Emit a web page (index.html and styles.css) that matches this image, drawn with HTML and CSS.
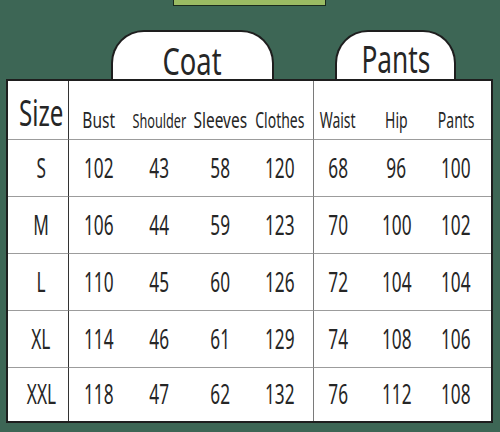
FILE: index.html
```html
<!DOCTYPE html>
<html>
<head>
<meta charset="utf-8">
<link rel="stylesheet" href="styles.css">
</head>
<body>
<div class="page">
  <div class="banner"></div>
  <div class="tabs">
    <div class="tab tab-coat"><span class="t">Coat</span></div>
    <div class="tab tab-pants"><span class="t">Pants</span></div>
  </div>
  <div class="table">
    <div class="cell head size-head"><span class="t">Size</span></div>
    <div class="cell head"><span class="t wide">Bust</span></div>
    <div class="cell head small"><span class="t">Shoulder</span></div>
    <div class="cell head"><span class="t wide">Sleeves</span></div>
    <div class="cell head"><span class="t">Clothes</span></div>
    <div class="cell head"><span class="t">Waist</span></div>
    <div class="cell head"><span class="t">Hip</span></div>
    <div class="cell head"><span class="t">Pants</span></div>

    <div class="cell"><span class="t">S</span></div>
    <div class="cell"><span class="t">102</span></div>
    <div class="cell"><span class="t">43</span></div>
    <div class="cell"><span class="t">58</span></div>
    <div class="cell"><span class="t">120</span></div>
    <div class="cell"><span class="t">68</span></div>
    <div class="cell"><span class="t">96</span></div>
    <div class="cell"><span class="t">100</span></div>

    <div class="cell"><span class="t">M</span></div>
    <div class="cell"><span class="t">106</span></div>
    <div class="cell"><span class="t">44</span></div>
    <div class="cell"><span class="t">59</span></div>
    <div class="cell"><span class="t">123</span></div>
    <div class="cell"><span class="t">70</span></div>
    <div class="cell"><span class="t">100</span></div>
    <div class="cell"><span class="t">102</span></div>

    <div class="cell"><span class="t">L</span></div>
    <div class="cell"><span class="t">110</span></div>
    <div class="cell"><span class="t">45</span></div>
    <div class="cell"><span class="t">60</span></div>
    <div class="cell"><span class="t">126</span></div>
    <div class="cell"><span class="t">72</span></div>
    <div class="cell"><span class="t">104</span></div>
    <div class="cell"><span class="t">104</span></div>

    <div class="cell"><span class="t">XL</span></div>
    <div class="cell"><span class="t">114</span></div>
    <div class="cell"><span class="t">46</span></div>
    <div class="cell"><span class="t">61</span></div>
    <div class="cell"><span class="t">129</span></div>
    <div class="cell"><span class="t">74</span></div>
    <div class="cell"><span class="t">108</span></div>
    <div class="cell"><span class="t">106</span></div>

    <div class="cell"><span class="t">XXL</span></div>
    <div class="cell"><span class="t">118</span></div>
    <div class="cell"><span class="t">47</span></div>
    <div class="cell"><span class="t">62</span></div>
    <div class="cell"><span class="t">132</span></div>
    <div class="cell"><span class="t">76</span></div>
    <div class="cell"><span class="t">112</span></div>
    <div class="cell"><span class="t">108</span></div>
  </div>
</div>
</body>
</html>
```
FILE: styles.css
```css
* { box-sizing: border-box; }

html, body {
  margin: 0;
  padding: 0;
}

body {
  width: 500px;
  height: 432px;
  overflow: hidden;
  background: #3d6655;
  font-family: "Noto Sans", "Open Sans", sans-serif;
  color: #262626;
}

.page {
  padding: 0 7px 0 6px;
}

.banner {
  margin-left: 167px;
  width: 153px;
  height: 6px;
  background: #9bbb63;
  border: 1px solid #1b2a1d;
  border-top: 0;
}

.tabs {
  display: flex;
  margin-top: 24px;
  height: 49px;
  padding-left: 105px;
  gap: 61px;
}

.tab {
  height: 49px;
  background: #fff;
  border: 2px solid #1e1e1e;
  border-bottom: 0;
  border-radius: 33px 33px 0 0;
  display: flex;
  justify-content: center;
  align-items: center;
  font-size: 38px;
  line-height: 1;
}

.tab-coat {
  width: 163px;
  padding-top: 8px;
}

.tab-coat .t { transform: scaleX(0.72); }

.tab-pants {
  width: 121px;
  padding-top: 4px;
}

.tab-pants .t { transform: scaleX(0.69); }

.t {
  display: inline-block;
  white-space: nowrap;
  transform: scaleX(0.65);
  transform-origin: center;
}

.t.wide { transform: scaleX(0.72); }

.table {
  width: 487px;
  background: #fff;
  border: 2px solid #1e1e1e;
  display: grid;
  grid-template-columns: 60px 61px 61px 61px 62px 59px 59px 60px;
  grid-template-rows: 59px 57px 57px 57px 57px 53px;
}

.cell {
  display: flex;
  justify-content: center;
  align-items: center;
  font-size: 26.5px;
  line-height: 1;
}

.cell:nth-child(-n+40) {
  border-bottom: 1px solid #9c9c9c;
}

.cell:nth-child(8n+2) {
  border-left: 1px solid #333;
}

.cell:nth-child(8n+6) {
  border-left: 1px solid #7a7a7a;
}

.cell:nth-child(8n+1) { padding-left: 6px; }
.cell:nth-child(8n+5) { padding-right: 5px; }
.cell:nth-child(8n+6),
.cell:nth-child(8n+7),
.cell:nth-child(8n+8) { padding-right: 10px; }

.cell.head {
  align-items: flex-end;
  padding-bottom: 9px;
  font-size: 21.5px;
}

.cell.head.small {
  font-size: 19.5px;
  padding-bottom: 8.5px;
}

.cell.head.size-head {
  font-size: 36px;
  padding-bottom: 8px;
}

.size-head .t { transform: scaleX(0.67); }
```
